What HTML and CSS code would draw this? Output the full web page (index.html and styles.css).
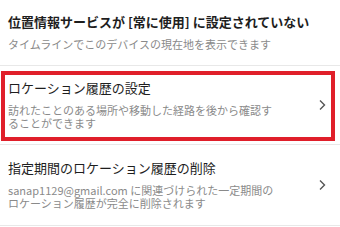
FILE: index.html
```html
<!DOCTYPE html>
<html lang="ja">
<head>
  <meta charset="UTF-8">
  <title>ロケーション履歴</title>
  <meta name="viewport" content="width=device-width, initial-scale=1.0">
  <link rel="stylesheet" href="styles.css">
</head>
<body>

  <div class="setting first">
    <div class="text">
      <div class="title bold">位置情報サービスが [常に使用] に設定されていない</div>
      <div class="desc">タイムラインでこのデバイスの現在地を表示できます</div>
    </div>
  </div>

  <div class="setting">
    <div class="text">
      <div class="title">ロケーション履歴の設定</div>
      <div class="desc">訪れたことのある場所や移動した経路を後から確認することができます</div>
    </div>
    <svg class="chevron" width="8" height="12" viewBox="0 0 8 12"><path d="M2 1.5 L6.5 6 L2 10.5" /></svg>
    <div class="highlight"></div>
  </div>

  <div class="setting last">
    <div class="text">
      <div class="title">指定期間のロケーション履歴の削除</div>
      <div class="desc">sanap1129@gmail.com に関連づけられた一定期間のロケーション履歴が完全に削除されます</div>
    </div>
    <svg class="chevron" width="8" height="12" viewBox="0 0 8 12"><path d="M2 1.5 L6.5 6 L2 10.5" /></svg>
  </div>

</body>
</html>
```

FILE: styles.css
```css
body {
  margin: 0;
  background: #fff;
  font-family: "Noto Sans CJK JP", "Noto Sans", sans-serif;
  color: #222;
}

.setting {
  position: relative;
  display: flex;
  align-items: center;
  padding: 14px 14px 14px 8px;
  border-bottom: 1px solid #e8e8e8;
}

.setting.last {
  padding-top: 15px;
  padding-bottom: 15px;
}

.text {
  flex: 1;
}

.title {
  font-size: 13px;
  line-height: 16px;
  margin-bottom: 8px;
  color: #1e1e1e;
}

.title.bold {
  font-weight: bold;
}

.desc {
  font-size: 11px;
  line-height: 13px;
  color: #8a8a8a;
  max-width: 272px;
}

.chevron {
  flex: none;
  margin-left: 20px;
}

.chevron path {
  fill: none;
  stroke: #555;
  stroke-width: 1.4;
}

/* red frame drawn over the location history row */
.highlight {
  position: absolute;
  top: 5px;
  left: 1px;
  right: 5px;
  bottom: 3px;
  border: 4px solid #e01f2a;
  pointer-events: none;
}
```
